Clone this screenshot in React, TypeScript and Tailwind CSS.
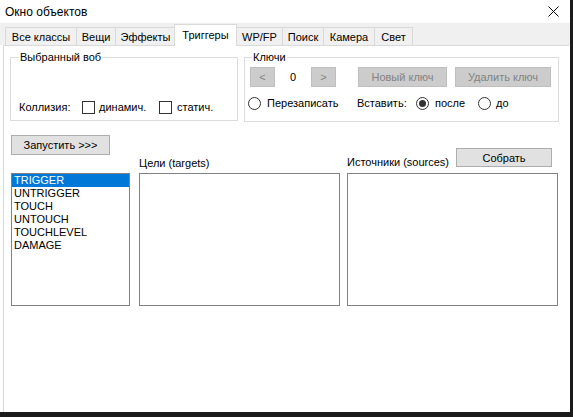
import React from 'react';

const tabs = [
  { label: 'Все классы', w: 'w-[72px]' },
  { label: 'Вещи', w: 'w-[40px]' },
  { label: 'Эффекты', w: 'w-[61px]' },
  { label: 'Триггеры', w: 'w-[63px]', active: true },
  { label: 'WP/FP', w: 'w-[47px]' },
  { label: 'Поиск', w: 'w-[42px]' },
  { label: 'Камера', w: 'w-[52px]' },
  { label: 'Свет', w: 'w-[39px]' },
];

const events = ['TRIGGER', 'UNTRIGGER', 'TOUCH', 'UNTOUCH', 'TOUCHLEVEL', 'DAMAGE'];

const Checkbox = () => <span className="w-[13px] h-[13px] border border-[#333333] bg-white shrink-0" />;

const Radio = ({ checked }: { checked?: boolean }) => (
  <span className="w-[13px] h-[13px] rounded-full border border-[#333333] bg-white shrink-0 flex items-center justify-center">
    {checked && <span className="w-[7px] h-[7px] rounded-full bg-[#333333]" />}
  </span>
);

const DisabledButton = ({ children, w }: { children: React.ReactNode; w: string }) => (
  <div className={`${w} h-[20px] bg-[#cccccc] border border-[#bfbfbf] text-[#838383] flex items-center justify-center shrink-0`}>
    {children}
  </div>
);

export default function App() {
  return (
    <div className="w-[573px] h-[417px] bg-[#1b1b1b] overflow-hidden">
      <div className="w-[570px] h-[412px] bg-white flex flex-col text-[11px] leading-[14px] text-black font-['Liberation_Sans',Arial,sans-serif] whitespace-nowrap">
        {/* title bar */}
        <div className="h-[23px] shrink-0 flex items-center justify-between pl-[5px] pr-[11px]">
          <span className="text-[12px]">Окно объектов</span>
          <svg width="11" height="11" viewBox="0 0 11 11">
            <path d="M0.5 0.5 L10.5 10.5 M10.5 0.5 L0.5 10.5" stroke="#000" strokeWidth="1" />
          </svg>
        </div>

        {/* tab strip */}
        <div className="h-[22px] shrink-0 bg-[#f0f0f0] flex items-end pl-[5px] relative z-10">
          {tabs.map((t) =>
            t.active ? (
              <div
                key={t.label}
                className={`${t.w} h-[22px] -mb-px bg-white border border-b-0 border-[#d9d9d9] flex items-start justify-center pt-[3px] -mx-px`}
              >
                {t.label}
              </div>
            ) : (
              <div
                key={t.label}
                className={`${t.w} h-[18px] bg-[#f0f0f0] border border-b-0 border-[#d9d9d9] flex items-center justify-center -mr-px`}
              >
                {t.label}
              </div>
            )
          )}
        </div>

        {/* content panel */}
        <div className="flex-1 ml-[3px] mr-[1px] border-l border-t border-[#d9d9d9] bg-white pl-[6px] pt-[4px] flex flex-col">
          <div className="flex gap-[6px]">
            <fieldset className="w-[228px] h-[71px] border border-[#dcdcdc] pl-[8px]">
              <legend className="px-[1px]">Выбранный воб</legend>
              <div className="mt-[36px] flex items-center">
                <span className="w-[63px]">Коллизия:</span>
                <Checkbox />
                <span className="ml-[4px] w-[60px]">динамич.</span>
                <Checkbox />
                <span className="ml-[5px]">статич.</span>
              </div>
            </fieldset>

            <fieldset className="w-[315px] h-[72px] border border-[#dcdcdc] pl-[3px]">
              <legend className="ml-[4px] px-[1px]">Ключи</legend>
              <div className="mt-[3px] ml-[2px] flex items-center">
                <DisabledButton w="w-[25px]">&lt;</DisabledButton>
                <span className="w-[36px] text-center">0</span>
                <DisabledButton w="w-[25px]">&gt;</DisabledButton>
                <div className="ml-[22px]">
                  <DisabledButton w="w-[89px]">Новый ключ</DisabledButton>
                </div>
                <div className="ml-[8px]">
                  <DisabledButton w="w-[96px]">Удалить ключ</DisabledButton>
                </div>
              </div>
              <div className="mt-[9px] flex items-center">
                <Radio />
                <span className="ml-[6px] w-[90px]">Перезаписать</span>
                <span className="w-[59px]">Вставить:</span>
                <Radio checked />
                <span className="ml-[6px] w-[43px]">после</span>
                <Radio />
                <span className="ml-[5px]">до</span>
              </div>
            </fieldset>
          </div>

          <div className="mt-[13px] flex items-start">
            <div className="ml-[1px] w-[119px] flex flex-col">
              <div className="w-[99px] h-[20px] bg-[#e1e1e1] border border-[#adadad] flex items-center justify-center">
                Запустить &gt;&gt;&gt;
              </div>
              <div className="mt-[18px] h-[133px] border border-[#828282] bg-white text-[11px] leading-[13px]">
                {events.map((e, i) => (
                  <div key={e} className={i === 0 ? 'bg-[#0078d7] text-white pl-[2px]' : 'pl-[2px]'}>
                    {e}
                  </div>
                ))}
              </div>
            </div>

            <div className="ml-[9px] w-[201px] flex flex-col">
              <span className="mt-[21px]">Цели (targets)</span>
              <div className="mt-[3px] h-[133px] border border-[#828282] bg-white" />
            </div>

            <div className="ml-[7px] w-[211px] flex flex-col">
              <div className="mt-[13px] flex items-end">
                <span className="mb-[-2px]">Источники (sources)</span>
                <div className="ml-auto mr-[6px] w-[96px] h-[19px] bg-[#e1e1e1] border border-[#adadad] flex items-center justify-center">
                  Собрать
                </div>
              </div>
              <div className="mt-[6px] h-[133px] border border-[#828282] bg-white" />
            </div>
          </div>
        </div>
      </div>
    </div>
  );
}
